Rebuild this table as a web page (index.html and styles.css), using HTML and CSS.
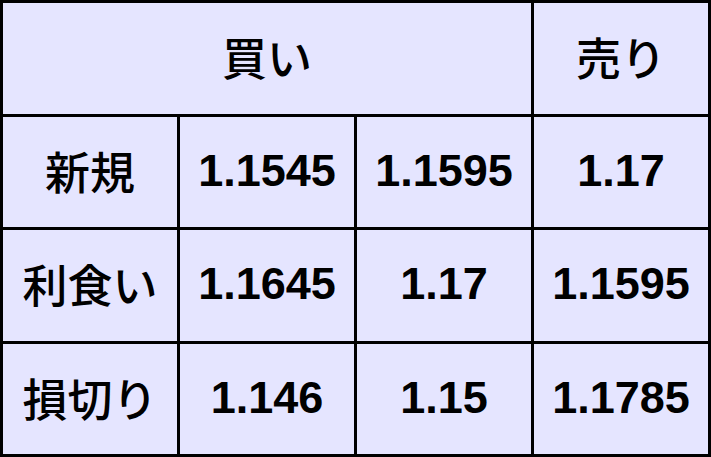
FILE: index.html
```html
<!DOCTYPE html>
<html lang="ja">
<head>
<meta charset="utf-8">
<link rel="stylesheet" href="styles.css">
</head>
<body>
<table class="grid">
  <colgroup><col class="c"><col class="c"><col class="c"><col class="c"></colgroup>
  <tr><td class="jp" colspan="3">買い</td><td class="jp">売り</td></tr>
  <tr><td class="jp">新規</td><td>1.1545</td><td>1.1595</td><td>1.17</td></tr>
  <tr><td class="jp">利食い</td><td>1.1645</td><td>1.17</td><td>1.1595</td></tr>
  <tr><td class="jp">損切り</td><td>1.146</td><td>1.15</td><td>1.1785</td></tr>
</table>
</body>
</html>
```
FILE: styles.css
```css
html, body {
  margin: 0;
  padding: 0;
  background: #e5e5ff;
}
.grid {
  width: 711px;
  height: 457px;
  border-collapse: collapse;
  table-layout: fixed;
  font-family: "Liberation Sans", Arial, "Noto Sans CJK JP", sans-serif;
  font-weight: bold;
  font-size: 45px;
  color: #000;
}
.grid td {
  border: 3px solid #000;
  background: #e5e5ff;
  text-align: center;
  vertical-align: middle;
  padding: 0 0 3px 0;
  height: 107px;
  line-height: 1;
}
.grid td.jp {
  font-family: "Noto Sans CJK JP", sans-serif;
  font-size: 45px;
  font-weight: 500;
}
```
